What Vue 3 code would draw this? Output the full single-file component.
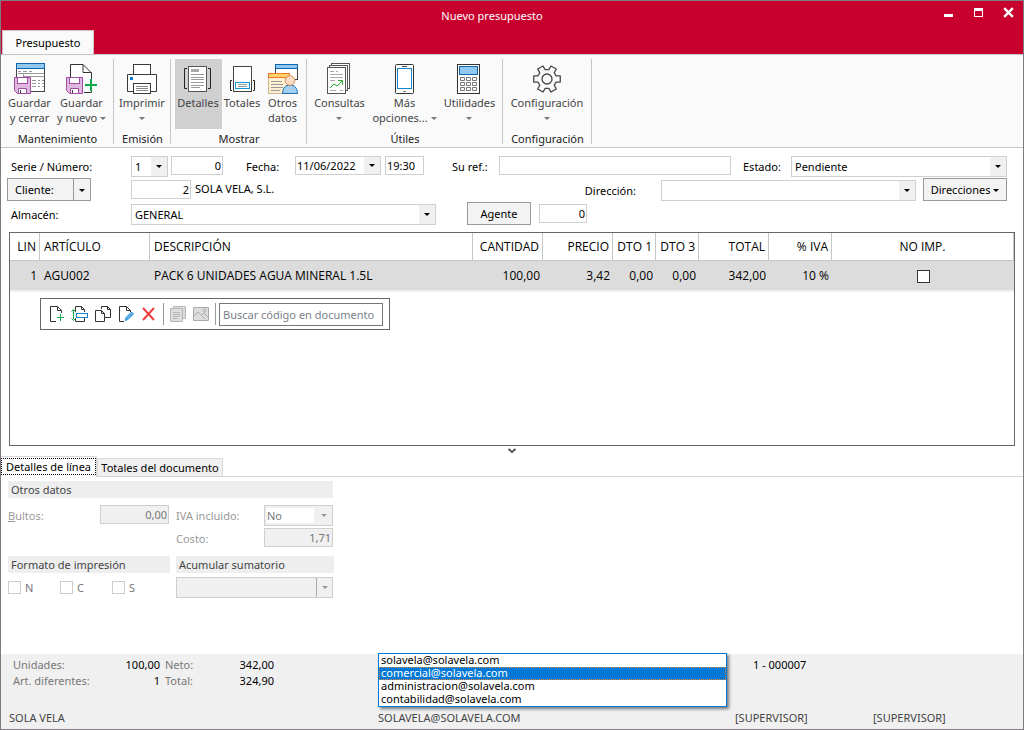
<script setup>
import { ref } from 'vue'

const serie = ref('1')
const numero = ref('0')
const fecha = ref('11/06/2022')
const hora = ref('19:30')
const suRef = ref('')
const estado = ref('Pendiente')
const cliente = ref('2')
const direccion = ref('')
const almacen = ref('GENERAL')
const agente = ref('0')
const buscar = ref('')
const bultos = ref('0,00')
const ivaIncluido = ref('No')
const costo = ref('1,71')
const acumular = ref('')

const lines = [
  { lin: 1, art: 'AGU002', desc: 'PACK 6 UNIDADES AGUA MINERAL 1.5L', cant: '100,00', precio: '3,42', d1: '0,00', d3: '0,00', total: '342,00', iva: '10 %' },
]
const emails = ['solavela@solavela.com', 'comercial@solavela.com', 'administracion@solavela.com', 'contabilidad@solavela.com']
const selectedEmail = ref(1)

function gear(cx, cy) {
  const pts = []
  for (let i = 0; i < 6; i++) {
    const a = i * 60
    for (const [d, r] of [[-19, 9.6], [-13, 13.6], [13, 13.6], [19, 9.6]]) {
      const t = ((a + d) * Math.PI) / 180
      pts.push(`${(cx + r * Math.cos(t)).toFixed(2)},${(cy + r * Math.sin(t)).toFixed(2)}`)
    }
  }
  return pts.join(' ')
}
</script>

<template>
  <div class="window">
    <header class="titlebar">
      <div class="title">Nuevo presupuesto</div>
      <div class="winbtns">
        <button type="button" aria-label="Minimizar"><svg width="11" height="11"><rect x="1" y="7" width="9" height="3" fill="#fff" /></svg></button>
        <button type="button" aria-label="Maximizar"><svg width="11" height="11"><path d="M1 1h9v9H1zM2 4v5h7V4z" fill="#fff" fill-rule="evenodd" /></svg></button>
        <button type="button" aria-label="Cerrar"><svg width="11" height="11"><path d="M1.2 1.2l8.6 8.6M9.8 1.2L1.2 9.8" stroke="#fff" stroke-width="2.4" /></svg></button>
      </div>
      <button type="button" class="maintab">Presupuesto</button>
    </header>

    <nav class="ribbon">
      <section class="group g1">
        <div class="tools">
          <button type="button" class="tool">
            <svg width="34" height="33" fill="none">
              <rect x="3.5" y="2.5" width="28" height="27" fill="#fff" stroke="#444" />
              <path d="M5 9.500h3m2 0h4m2 0h3M5 11.500h26M10.500 12v5m0-2.500h21" stroke="#999" />
              <path d="M19 18.500h4m2 0h2m2 0h2M19 21.500h4m2 0h2m2 0h2M19 24.500h4m2 0h2m2 0h2" stroke="#999" />
              <rect x="3.500" y="1.500" width="28" height="5" fill="#91c8ef" stroke="#0c65ae" />
              <path d="M1.500 15.500h16v16h-13l-3-3z" fill="#deb8de" stroke="#a04ca0" />
              <rect x="4.500" y="15.500" width="10" height="6" fill="#fff" stroke="#a04ca0" />
              <path d="M5.500 31.500v-5h8v5z" fill="#fff" stroke="#a04ca0" /><path d="M7.500 28v3" stroke="#444" />
            </svg>
            <span>Guardar<br>y cerrar</span>
          </button>
          <button type="button" class="tool">
            <svg width="34" height="33" fill="none">
              <path d="M5.500 16V2.500h12.500l8.500 8.500v7M26.500 29v1.500H19" fill="#fff" stroke="#333" />
              <path d="M18 2.500V10.500h8.500" stroke="#333" />
              <path d="M1.500 15.500h16v16h-13l-3-3z" fill="#deb8de" stroke="#a04ca0" />
              <rect x="4.500" y="15.500" width="10" height="6" fill="#fff" stroke="#a04ca0" />
              <path d="M5.500 31.500v-5h8v5z" fill="#fff" stroke="#a04ca0" /><path d="M7.500 28v3" stroke="#444" />
              <path d="M20 23h12M26 17v12" stroke="#0daa4b" stroke-width="2" />
            </svg>
            <span>Guardar<br>y nuevo <i class="tri" /></span>
          </button>
        </div>
        <h2>Mantenimiento</h2>
      </section>

      <section class="group g2">
        <div class="tools">
          <button type="button" class="tool">
            <svg width="34" height="33" fill="none" stroke="#3b3b3b">
              <rect x="8.500" y="2.500" width="17" height="12" fill="#fff" />
              <path d="M8.500 29.500h-6v-17h29v17h-6" fill="#fff" />
              <rect x="5" y="15" width="3" height="3" fill="#0b7bd0" stroke="none" />
              <rect x="8.500" y="21.500" width="17" height="10" fill="#fff" />
              <path d="M11 24.500h12M11 26.500h12M11 28.500h12" stroke="#888" />
            </svg>
            <span>Imprimir<br><i class="tri" /></span>
          </button>
        </div>
        <h2>Emisión</h2>
      </section>

      <section class="group g3">
        <div class="tools">
          <button type="button" class="tool active" aria-pressed="true">
            <svg width="34" height="33" fill="none">
              <rect x="7.500" y="4.500" width="18" height="25" fill="#fff" stroke="#555" />
              <rect x="10" y="7" width="8" height="3" fill="#aaa" />
              <path d="M10 12.500h13M10 15.500h13M10 17.500h13M10 20.500h13M10 23.500h13M10 25.500h9" stroke="#999" />
              <path d="M6 6.500H3.500v20H6M27 6.500h2.500v20H27" stroke="#222" />
            </svg>
            <span>Detalles</span>
          </button>
          <button type="button" class="tool">
            <svg width="34" height="33" fill="none">
              <rect x="8.500" y="4.500" width="18" height="25" fill="#fff" stroke="#444" />
              <path d="M7 18.500H5.500v10H7M28 18.500h1.500v10H28" stroke="#222" />
              <rect x="10.500" y="20.500" width="14" height="6" fill="#fff" stroke="#1494d8" />
              <path d="M13 22.500h9M13 24.500h9" stroke="#999" />
            </svg>
            <span>Totales</span>
          </button>
          <button type="button" class="tool">
            <svg width="34" height="33" fill="none">
              <rect x="9.500" y="3.500" width="22" height="14" fill="#fff" stroke="#444" />
              <rect x="9.500" y="2.500" width="22" height="4" fill="#91c8ef" stroke="#0c65ae" />
              <rect x="2.500" y="12.500" width="21" height="19" fill="#fff0d2" stroke="#c9b58e" />
              <rect x="2.500" y="11.500" width="21" height="4" fill="#fbd56c" stroke="#ee7826" />
              <path d="M5 19.500h11M5 22.500h12M5 25.500h12M5 28.500h9" stroke="#999" />
              <path d="M16.500 31.500c.5-6 3-8.500 7.500-8.500s7 2.500 7.500 8.500z" fill="#a3d0f0" stroke="#1b6cb0" />
              <circle cx="24" cy="18.500" r="4.800" fill="#fbdcc2" stroke="#dd8e5e" />
            </svg>
            <span>Otros<br>datos</span>
          </button>
        </div>
        <h2>Mostrar</h2>
      </section>

      <section class="group g4">
        <div class="tools">
          <button type="button" class="tool">
            <svg width="34" height="33" fill="none" stroke="#555">
              <rect x="8.500" y="1.500" width="18" height="25" fill="#fff" />
              <rect x="6.500" y="3.500" width="18" height="25" fill="#fff" />
              <rect x="4.500" y="5.500" width="18" height="26" fill="#fff" />
              <path d="M7 9.500h4m2 0h2M7 12.500h13M7 15.500h13M7 18.500h5M17 28.500h3M7 28.500h6" stroke="#aaa" />
              <path d="M7 26l4-4 3 2 5-5M15 18.500h4.500v4" stroke="#25a52b" />
            </svg>
            <span>Consultas<br><i class="tri" /></span>
          </button>
          <button type="button" class="tool">
            <svg width="34" height="33" fill="none">
              <rect x="7.500" y="2.500" width="18" height="29" rx="1" fill="#fff" stroke="#333" />
              <rect x="9.500" y="6.500" width="14" height="20" fill="#fff" stroke="#1683cc" />
              <path d="M14 4.500h5M15.500 29.500h2" stroke="#444" />
            </svg>
            <span>Más<br>opciones... <i class="tri" /></span>
          </button>
          <button type="button" class="tool">
            <svg width="34" height="33" fill="none">
              <rect x="4.500" y="2.500" width="22" height="29" fill="#fff" stroke="#333" />
              <rect x="6.500" y="4.500" width="18" height="8" fill="#91c8ef" stroke="#0c65ae" />
              <g stroke="#777">
                <path d="M7.500 15.500h4v3h-4zM13.500 15.500h4v3h-4zM19.500 15.500h4v3h-4zM7.500 20.500h4v3h-4zM13.500 20.500h4v3h-4zM19.500 20.500h4v3h-4zM7.500 25.500h4v3h-4zM13.500 25.500h4v3h-4zM19.500 25.500h4v3h-4z" />
              </g>
            </svg>
            <span>Utilidades<br><i class="tri" /></span>
          </button>
        </div>
        <h2>Útiles</h2>
      </section>

      <section class="group g5">
        <div class="tools">
          <button type="button" class="tool">
            <svg width="34" height="33" fill="none" stroke="#444" stroke-width="1.300" stroke-linejoin="round">
              <polygon :points="gear(17, 17)" />
              <circle cx="17" cy="17" r="5" />
            </svg>
            <span>Configuración<br><i class="tri" /></span>
          </button>
        </div>
        <h2>Configuración</h2>
      </section>
    </nav>

    <form class="form" @submit.prevent>
      <div class="row">
        <label for="serie" class="first">Serie / Número:</label>
        <div class="combo serie"><select id="serie" v-model="serie"><option>1</option></select><i class="arrow" /></div>
        <input v-model="numero" class="num numero" aria-label="Número">
        <label for="fecha" class="lfecha">Fecha:</label>
        <div class="combo fecha"><input id="fecha" v-model="fecha"><i class="arrow" /></div>
        <input v-model="hora" class="hora" aria-label="Hora">
        <label for="suref" class="lref">Su ref.:</label>
        <input id="suref" v-model="suRef" class="suref">
        <label for="estado" class="lestado">Estado:</label>
        <div class="combo estado"><select id="estado" v-model="estado"><option>Pendiente</option></select><i class="arrow" /></div>
      </div>
      <div class="row">
        <div class="split">
          <button type="button" class="btn cli">Cliente:</button>
          <button type="button" class="btn drop" aria-label="Opciones de cliente"><i class="tri dark" /></button>
        </div>
        <input v-model="cliente" class="num cliente" aria-label="Cliente">
        <span class="cliname">SOLA VELA, S.L.</span>
        <label for="direccion" class="ldir">Dirección:</label>
        <div class="combo direccion"><select id="direccion" v-model="direccion"><option value="" /></select><i class="arrow" /></div>
        <button type="button" class="btn dirs">Direcciones <i class="tri dark" /></button>
      </div>
      <div class="row">
        <label for="almacen" class="first">Almacén:</label>
        <div class="combo almacen"><select id="almacen" v-model="almacen"><option>GENERAL</option></select><i class="arrow" /></div>
        <button type="button" class="btn agente">Agente</button>
        <input v-model="agente" class="num nagente" aria-label="Agente">
      </div>
    </form>

    <div class="sheet">
      <table>
        <colgroup>
          <col class="c1"><col class="c2"><col><col class="c4"><col class="c4"><col class="c6"><col class="c6"><col class="c4"><col class="c9"><col class="c10">
        </colgroup>
        <thead>
          <tr>
            <th class="r">LIN</th><th>ARTÍCULO</th><th>DESCRIPCIÓN</th><th class="r">CANTIDAD</th><th class="r">PRECIO</th>
            <th class="r">DTO 1</th><th class="r">DTO 3</th><th class="r">TOTAL</th><th class="r">% IVA</th><th class="c">NO IMP.</th>
          </tr>
        </thead>
        <tbody>
          <tr v-for="l in lines" :key="l.lin">
            <td class="r">{{ l.lin }}</td><td>{{ l.art }}</td><td>{{ l.desc }}</td><td class="r">{{ l.cant }}</td><td class="r">{{ l.precio }}</td>
            <td class="r">{{ l.d1 }}</td><td class="r">{{ l.d3 }}</td><td class="r">{{ l.total }}</td><td class="r">{{ l.iva }}</td>
            <td class="c"><input type="checkbox" class="check" aria-label="No imprimir"></td>
          </tr>
        </tbody>
      </table>
      <div class="minibar">
        <button type="button" aria-label="Nueva línea"><svg width="18" height="18" fill="none" stroke="#333"><path d="M8 16.500H2.500v-15h7l4 4V8M9.500 1.500v4h4" /><path d="M9 12.500h7M12.500 9v7" stroke="#17a84d" /></svg></button>
        <button type="button" aria-label="Insertar línea"><svg width="18" height="18" fill="none" stroke="#333"><path d="M4.500 7V1.500h6l3 3V7M10.500 1.500v3h3M4.500 13v3.500h9V13" /><rect x="5.500" y="8.500" width="11" height="4" stroke="#1683cc" /><path d="M2.500 5v9M.5 6.500l2-2 2 2M.5 13.500l2 2 2-2" stroke="#17a84d" /></svg></button>
        <button type="button" aria-label="Duplicar línea"><svg width="18" height="18" fill="none" stroke="#333"><path d="M7.500 4V1.500h6l3 3v8H11M13.500 1.500v3h3" /><path d="M1.500 5.500h6l3 3v8h-9zM7.500 5.500v3h3" /></svg></button>
        <button type="button" aria-label="Editar línea"><svg width="18" height="18" fill="none" stroke="#333"><path d="M7 16.500H2.500v-15h7l4 4V7M9.500 1.500v4h4" /><path d="M8 15.500l1-3 5.500-5.500 2 2-5.500 5.500z" fill="#58ade8" stroke="#3a96d8" /></svg></button>
        <button type="button" aria-label="Eliminar línea"><svg width="18" height="18" fill="none" stroke="#ec4040" stroke-width="2"><path d="M3 3l11 12M14 3L3 15" /></svg></button>
        <span class="vsep" />
        <button type="button" aria-label="Notas" disabled><svg width="18" height="18" fill="#ddd" stroke="#b5b5b5"><path d="M4.500 1.500h12v12h-12z" /><path d="M1.500 3.500h12v13h-12z" /><path d="M4 7.500h7M4 9.500h7M4 11.500h7M4 13.500h4" /></svg></button>
        <button type="button" aria-label="Imagen" disabled><svg width="18" height="18" fill="#ddd" stroke="#aaa"><path d="M1.500 2.500h15v13h-15z" /><path d="M2 11l4-4 7 7M9 11l3-3 4 4" fill="none" /><circle cx="12.500" cy="5.500" r="1.500" /></svg></button>
        <span class="vsep" />
        <input v-model="buscar" placeholder="Buscar código en documento" aria-label="Buscar código en documento">
      </div>
    </div>

    <button type="button" class="collapse" aria-label="Contraer panel"><svg width="10" height="8" fill="none"><path d="M1.500 2l3.500 3 3.500-3" stroke="#555" stroke-width="2" /></svg></button>

    <div class="tabs" role="tablist">
      <button type="button" role="tab" class="on" aria-selected="true"><span>Detalles de línea</span></button>
      <button type="button" role="tab" aria-selected="false">Totales del documento</button>
    </div>

    <section class="details">
      <h3 class="wide">Otros datos</h3>
      <div class="fields">
        <label for="bultos"><u>B</u>ultos:</label>
        <input id="bultos" v-model="bultos" class="num off bultos" disabled>
        <label for="iva">IVA incluido:</label>
        <div class="combo off iva"><select id="iva" v-model="ivaIncluido" disabled><option>No</option></select><i class="arrow" /></div>
        <label for="costo" class="lcosto">Costo:</label>
        <input id="costo" v-model="costo" class="num off costo" disabled>
      </div>
      <div class="pair">
        <div>
          <h3>Formato de impresión</h3>
          <div class="checks">
            <label><input type="checkbox" class="check" disabled>N</label>
            <label><input type="checkbox" class="check" disabled>C</label>
            <label><input type="checkbox" class="check" disabled>S</label>
          </div>
        </div>
        <div>
          <h3>Acumular sumatorio</h3>
          <div class="combo off acum"><select v-model="acumular" aria-label="Acumular sumatorio" disabled><option value="" /></select><i class="arrow" /></div>
        </div>
      </div>
    </section>

    <footer class="footer">
      <div class="summary">
        <dl class="totals">
          <dt>Unidades:</dt><dd>100,00</dd><dt>Neto:</dt><dd>342,00</dd>
          <dt>Art. diferentes:</dt><dd>1</dd><dt>Total:</dt><dd>324,90</dd>
        </dl>
        <div class="docno">1 - 000007</div>
      </div>
      <div class="status">
        <span>SOLA VELA</span><span>SOLAVELA@SOLAVELA.COM</span><span>[SUPERVISOR]</span><span>[SUPERVISOR]</span>
      </div>
      <ul class="popup" role="listbox" aria-label="Correo electrónico">
        <li v-for="(e, i) in emails" :key="e" role="option" :aria-selected="i === selectedEmail" :class="{ sel: i === selectedEmail }" @click="selectedEmail = i">{{ e }}</li>
      </ul>
    </footer>
  </div>
</template>

<style>
body { margin: 0; }
</style>

<style scoped>
* { box-sizing: border-box; }
.window {
  min-height: 100vh; display: flex; flex-direction: column;
  border: 1px solid #807b80; background: #fff; color: #000;
  font: 11px/15px "Noto Sans", "Open Sans", sans-serif;
}
button, input, select { font: inherit; color: inherit; margin: 0; padding: 0; border-radius: 0; }
button { background: none; border: 0; }
h2, h3, dl, dd, ul { margin: 0; padding: 0; }
svg { display: block; }

.titlebar { display: grid; grid-template-columns: 1fr auto; grid-template-rows: 29px 24px; background: #c8002d; color: #fff; }
.title { grid-area: 1 / 1 / 2 / 3; text-align: center; padding: 7px 40px 0 0; }
.winbtns { grid-area: 1 / 2; display: flex; gap: 19px; padding: 6px 9px 0 0; align-items: flex-start; }
.maintab { grid-area: 2 / 1; justify-self: start; width: 92px; margin-left: 1px; background: #fafafa; color: #000; border: 1px solid #d0c0c4; border-bottom: 0; }

.ribbon { display: flex; height: 94px; padding: 4px 0 3px; background: #fafafa; border-top: 1px solid #c6c6c6; border-bottom: 1px solid #c6c6c6; color: #444; }
.group { display: flex; flex-direction: column; justify-content: space-between; border-right: 1px solid #c6c6c6; }
.group h2 { font: inherit; text-align: center; color: #222; line-height: 11px; padding-left: 1px; }
.tools { display: flex; justify-content: center; }
.g1 .tools { padding-right: 3px; }
.tool { display: flex; flex-direction: column; align-items: center; height: 70px; padding-top: 3px; white-space: nowrap; }
.tool span { line-height: 15px; }
.tool.active { background: #d0d0d0; }
.g1 { width: 113px; } .g2 { width: 57px; } .g3 { width: 136px; } .g4 { width: 196px; } .g5 { width: 89px; }
.g1 .tool { width: 52px; }
.g3 .tool { width: 47px; } .g3 .tool:nth-child(2) { width: 41px; } .g3 .tool:last-child { width: 40px; }
.g4 .tool { width: 65px; }
.tri { display: inline-block; border: 3px solid transparent; border-top-color: #777; border-bottom: 0; vertical-align: 2px; }
.tri.dark { border-top-color: #000; }

.form { display: flex; flex-direction: column; padding: 8px 16px 7px 6px; }
.row { display: flex; align-items: flex-start; height: 23px; }
.row:first-child { height: 22px; }
.row > input, .combo { height: 19px; border: 1px solid #cfcfcf; background: #fff; }
.row > input { padding: 0 4px; }
.combo { display: grid; height: 21px; grid-template: 100% / 100%; }
.combo select, .combo input { grid-area: 1 / 1; appearance: none; border: 0; background: none; padding: 0 18px 0 3px; width: 100%; min-width: 0; }
.arrow { grid-area: 1 / 1; justify-self: end; width: 16px; background: #f0f0f0; display: grid; place-items: center; pointer-events: none; }
.arrow::after { content: ""; border: 3px solid transparent; border-top-color: #000; border-bottom: 0; }
.row > input.num { text-align: right; padding-right: 1px; }
.num { text-align: right; }
.row label { line-height: 23px; white-space: nowrap; }
.row:first-child label { line-height: 21px; }
.row > .first { width: 124px; padding-left: 4px; }
.serie { width: 37px; }
.row > .numero { width: 52px; margin-left: 3px; }
.lfecha { width: 72px; padding-left: 23px; }
.combo.fecha { width: 86px; height: 19px; }
.combo.fecha input { padding-left: 1px; }
.row > .hora { width: 39px; margin-left: 4px; padding: 0 1px; }
.lref { width: 75px; padding-left: 28px; }
.row > .suref { flex: 232 1 232px; min-width: 60px; }
.lestado { width: 60px; padding-left: 12px; }
.combo.estado { flex: 216 1 216px; }
.btn { height: 23px; border: 1px solid #999; background: #f3f3f3; white-space: nowrap; }
.split { display: flex; width: 84px; margin-right: 40px; }
.cli { flex: 1; text-align: left; padding-left: 7px; }
.drop { width: 17px; border-left: 0; }
.row:nth-child(2) > input, .row:nth-child(2) > .combo, .row:last-child > input, .row:last-child > .combo { margin-top: 2px; }
.row > .cliente { width: 60px; }
.cliname { flex: 392 1 392px; padding-left: 4px; line-height: 21px; }
.row:nth-child(2) label, .row:last-child label { line-height: 25px; }
.ldir { width: 76px; }
.combo.direccion { flex: 254 1 254px; }
.dirs { width: 84px; margin-left: 7px; }
.row:last-child { margin-top: 1px; }
.combo.almacen { width: 305px; }
.agente { width: 64px; margin-left: 31px; }
.row > .nagente { width: 48px; margin-left: 8px; }

.sheet { margin: 0 8px; min-height: 214px; border: 1px solid #666; padding-bottom: 8px; }
table { width: 100%; table-layout: fixed; border-collapse: separate; border-spacing: 0; font-family: "Open Sans", "Noto Sans", sans-serif; font-size: 12px; }
th, td { padding: 0 4px; text-align: left; font-weight: 400; white-space: nowrap; }
th { height: 28px; border-right: 1px solid #c6c6c6; border-bottom: 1px solid #c6c6c6; }
td { height: 31px; background: #dcdcdc; border-bottom: 2px solid #efefef; }
th.r, td.r { padding-right: 3px; }
.r { text-align: right; } .c { text-align: center; }
.c1 { width: 30px; } .c2 { width: 110px; } .c4 { width: 70px; } .c6 { width: 43px; } .c9 { width: 63px; } .c10 { width: 182px; }
.check { appearance: none; display: inline-block; width: 13px; height: 13px; border: 1px solid #333; background: #fff; vertical-align: middle; }
.minibar { display: flex; align-items: center; gap: 5px; width: 350px; height: 32px; margin: 6px 0 0 30px; padding: 0 6px 0 7px; border: 1px solid #666; }
.vsep { width: 1px; height: 22px; background: #999; }
.minibar input { flex: 1; min-width: 0; height: 23px; border: 1px solid #777; padding: 0 3px; margin-left: -2px; }
.minibar input::placeholder { color: #7a7f8a; opacity: 1; }

.collapse { align-self: center; height: 10px; }
.tabs { display: flex; align-items: flex-end; height: 21px; border-bottom: 1px solid #d5d5d5; }
.tabs button { height: 18px; width: 126px; background: #f0f0f0; border: 1px solid #d9d9d9; border-bottom: 0; white-space: nowrap; }
.tabs .on { width: 96px; height: 21px; margin-bottom: -1px; padding-bottom: 2px; background: #fff; border-left: 0; }
.tabs .on span { display: block; border: 1px dotted #000; line-height: 15px; }

.details { flex: 1; padding: 4px 0 0 7px; color: #444; }
.details h3 { font: inherit; background: #eee; height: 17px; line-height: 17px; padding-left: 3px; }
.details .wide { width: 325px; }
.fields { display: grid; grid-template-columns: 92px 69px 95px 69px; row-gap: 2px; margin: 7px 0 7px; color: #999; }
.fields label { line-height: 21px; }
.fields label[for="iva"], .fields .lcosto { padding-left: 7px; }
.lcosto { grid-column: 3; }
.off { background: #f0f0f0; color: #777; border: 1px solid #cfcfcf; }
.fields > input { height: 19px; padding-right: 1px; }
.iva select { background: #fff; background-clip: content-box; border: 2px solid #f0f0f0; border-right: 0; padding: 0 18px 0 0; color: #777; opacity: 1; }
.off .arrow::after { border-top-color: #999; }
.pair { display: grid; grid-template-columns: 162px 158px; gap: 6px; }
.checks { display: flex; gap: 27px; padding-top: 8px; color: #777; }
.checks label { display: flex; gap: 4px; width: 25px; line-height: 13px; align-items: center; }
.checks .check { border-color: #ccc; flex: none; }
.combo.acum { width: 157px; margin-top: 4px; }
.acum .arrow { border-left: 1px solid #aaa; }

.footer { position: relative; min-height: 75px; display: flex; flex-direction: column; justify-content: space-between; padding: 3px 0 4px; background: #f0f0f0; }
.summary { display: flex; line-height: 16px; }
.totals { display: grid; grid-template-columns: 92px 55px 48px 66px; width: 752px; padding-left: 12px; color: #777; white-space: nowrap; }
.totals dd { text-align: right; color: #000; }
.totals dt:nth-of-type(even) { padding-left: 5px; }
.status { display: grid; grid-template-columns: 369px 357px 138px 1fr; padding-left: 8px; color: #444; }
.popup { position: absolute; left: 377px; top: -1px; width: 349px; border: 1px solid #0078d7; background: #fff; list-style: none; line-height: 13px; box-shadow: 2px 2px 3px rgba(0, 0, 0, .5); }
.popup li { padding-left: 2px; padding-bottom: 1px; line-height: 12px; }
.popup .sel { background: #0078d7; color: #fff; outline: 1px dotted #d98a40; outline-offset: -1px; }
</style>
